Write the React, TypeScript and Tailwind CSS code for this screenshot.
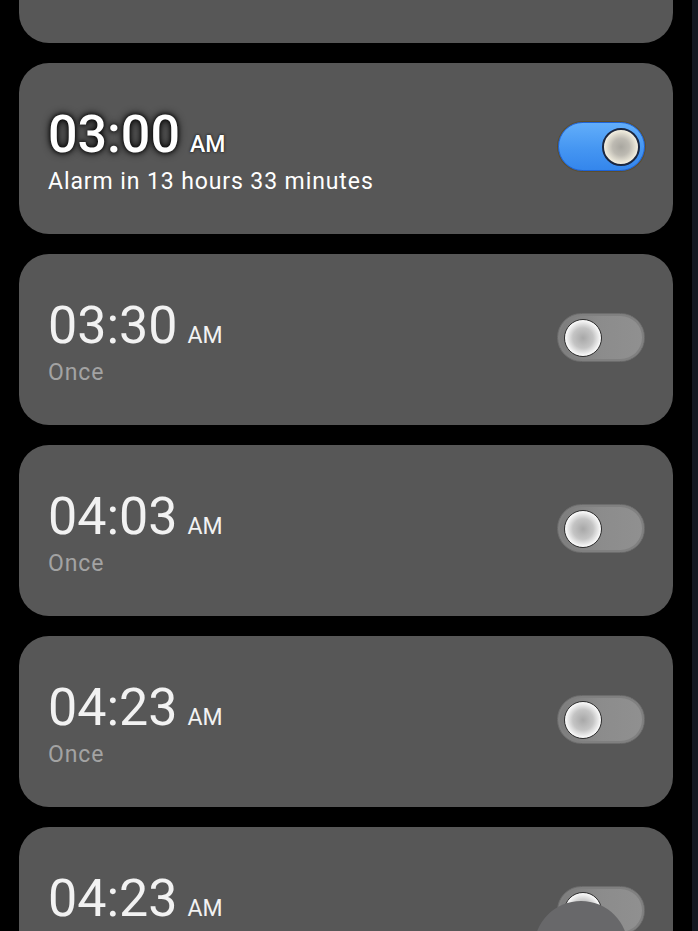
import React from 'react';

type Alarm = {
  time: string;
  label: string;
  on: boolean;
};

// first card is scrolled off the top, only its bottom edge shows;
// the last one is cut off below its time
const ALARMS: Alarm[] = [
  { time: '', label: '', on: false },
  { time: '03:00', label: 'Alarm in 13 hours 33 minutes', on: true },
  { time: '03:30', label: 'Once', on: false },
  { time: '04:03', label: 'Once', on: false },
  { time: '04:23', label: 'Once', on: false },
  { time: '04:23', label: '', on: false },
];

const Toggle: React.FC<{ on: boolean }> = ({ on }) => {
  if (on) {
    return (
      <div className="relative w-[87px] h-[49px] rounded-full shadow-[0_0_0_1px_#5c4e2c] bg-[linear-gradient(180deg,#62aefa_0%,#4596f2_55%,#3486ec_100%)] border border-[#1e63d6]">
        <div className="absolute right-[4px] top-1/2 -translate-y-1/2 w-[38px] h-[38px] rounded-full border-2 border-[#1b2740] bg-[radial-gradient(circle,#a9a7a0_0%,#bdbab2_35%,#f3efe0_70%,#fffbea_100%)]" />
      </div>
    );
  }
  return (
    <div className="relative w-[88px] h-[49px] rounded-full border border-[#6c6c6c] bg-[linear-gradient(90deg,#7c7c7c_0%,#8c8c8c_50%,#909090_100%)] shadow-[inset_0_0_0_2px_#808080]">
      <div className="absolute left-[6px] top-1/2 -translate-y-1/2 w-[38px] h-[38px] rounded-full border border-[#2e2e2e] bg-[radial-gradient(circle,#a8a8a8_0%,#c4c4c4_40%,#ffffff_72%,#ffffff_100%)]" />
    </div>
  );
};

const AlarmCard: React.FC<{ alarm: Alarm }> = ({ alarm }) => {
  if (!alarm.time) {
    return <div className="h-[171px] shrink-0 rounded-[30px] bg-[#575757]" />;
  }
  return (
    <div className="h-[171px] shrink-0 rounded-[30px] bg-[#575757] flex items-center justify-between pl-[29px] pr-[28px]">
      <div className="mt-[7px] flex flex-col">
        <div className="flex items-baseline h-[52px] leading-[52px]">
          <span
            className={
              alarm.on
                ? 'text-[52px] font-medium text-white [text-shadow:0_0_4px_#000,0_0_8px_#000]'
                : 'text-[52px] font-normal text-[#f2f2f2]'
            }
          >
            {alarm.time}
          </span>
          <span
            className={
              alarm.on
                ? 'ml-[10px] text-[23px] font-medium text-white [text-shadow:0_0_3px_#000]'
                : 'ml-[10px] text-[23px] font-normal text-[#f2f2f2]'
            }
          >
            AM
          </span>
        </div>
        <div
          className={
            alarm.on
              ? 'mt-[8px] h-[26px] leading-[26px] text-[23px] tracking-[0.9px] text-white'
              : 'mt-[8px] h-[26px] leading-[26px] text-[23px] tracking-[0.9px] text-[#a3a3a3]'
          }
        >
          {alarm.label}
        </div>
      </div>
      <div className="mb-[4px]">
        <Toggle on={alarm.on} />
      </div>
    </div>
  );
};

export default function App() {
  return (
    <div
      className="relative w-[698px] h-[931px] overflow-hidden bg-black flex"
      style={{ fontFamily: 'Roboto, "Noto Sans", "Liberation Sans", sans-serif' }}
    >
      <div className="flex-1 px-[19px]">
        <div className="-mt-[128px] flex flex-col gap-[20px]">
          {ALARMS.map((a, i) => (
            <AlarmCard key={i} alarm={a} />
          ))}
        </div>
      </div>
      <div className="w-[6px] bg-[#141821]" />

      {/* floating button peeking from the bottom edge */}
      <div className="absolute left-[534px] top-[901px] w-[94px] h-[94px] rounded-full bg-[#68686a]" />
    </div>
  );
}
